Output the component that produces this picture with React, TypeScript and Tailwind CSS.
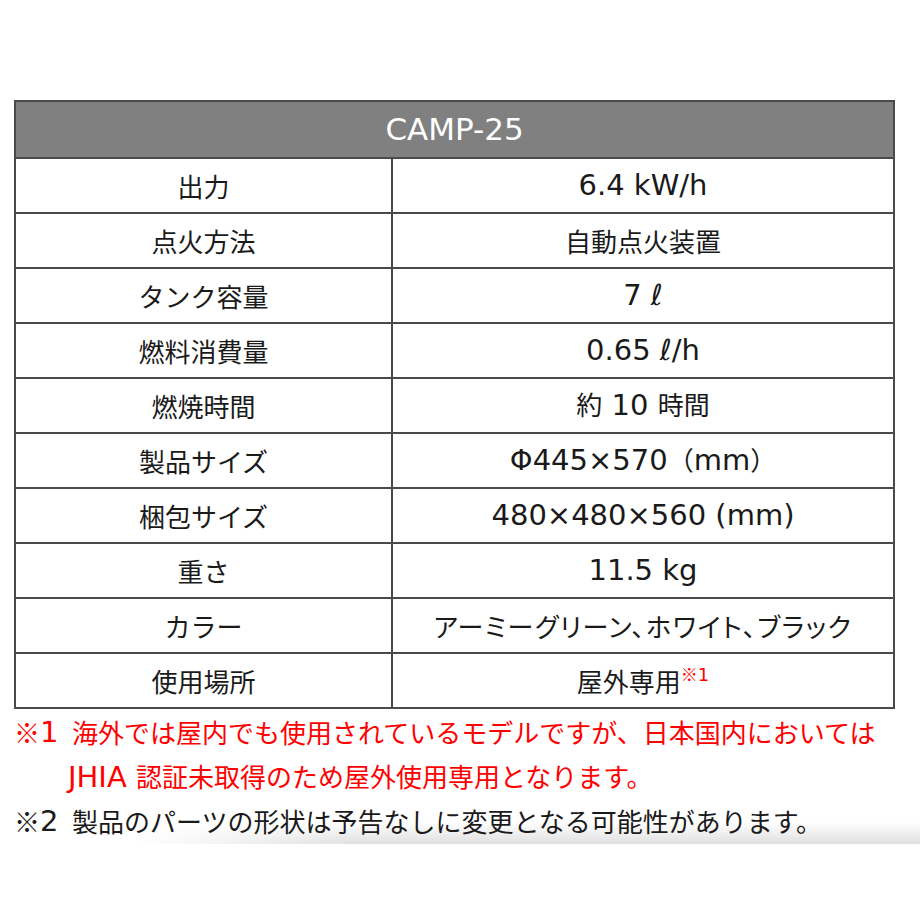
import React from "react";

// Latin runs are set a bit larger, like Meiryo's roman glyphs
const L = ({ children }: { children: React.ReactNode }) => (
  <span className="text-[29px]" style={{ fontFamily: '"DejaVu Sans", "Noto Sans CJK JP", sans-serif' }}>
    {children}
  </span>
);

const rows: { label: string; value: React.ReactNode }[] = [
  { label: "出力", value: <L>6.4 kW/h</L> },
  { label: "点火方法", value: "自動点火装置" },
  { label: "タンク容量", value: <L>7 ℓ</L> },
  { label: "燃料消費量", value: <L>0.65 ℓ/h</L> },
  {
    label: "燃焼時間",
    value: (
      <span>
        約<L> 10 </L>時間
      </span>
    ),
  },
  {
    label: "製品サイズ",
    value: (
      <span>
        <L>Φ445×570</L>（<L>mm</L>）
      </span>
    ),
  },
  { label: "梱包サイズ", value: <L>480×480×560 (mm)</L> },
  { label: "重さ", value: <L>11.5 kg</L> },
  {
    label: "カラー",
    value: (
      <span className="[font-feature-settings:'palt'] tracking-[1.5px]">
        アーミーグリーン、ホワイト、ブラック
      </span>
    ),
  },
  {
    label: "使用場所",
    value: (
      <span className="flex items-start">
        屋外専用
        <span className="text-[17px] leading-none text-[#ff0000] mt-[4px]">
          ※<span className="text-[18px]" style={{ fontFamily: '"DejaVu Sans", sans-serif' }}>1</span>
        </span>
      </span>
    ),
  },
];

export default function App() {
  return (
    <div
      className="w-[920px] h-[920px] bg-white pt-[100px] pl-[14px] text-[#1a1a1a]"
      style={{ fontFamily: '"Noto Sans CJK JP", sans-serif' }}
    >
      <div className="w-[881px] border-2 border-[#4a4a4a]">
        <div className="h-[55px] bg-[#808080] flex items-center justify-center text-white">
          <span className="text-[31px]" style={{ fontFamily: '"DejaVu Sans", sans-serif' }}>
            CAMP-25
          </span>
        </div>
        {rows.map((r, i) => (
          <div
            key={i}
            className="grid grid-cols-[377px_1fr] h-[55px] border-t-2 border-[#4a4a4a]"
          >
            <div className="flex items-center justify-center text-[26px] border-r-2 border-[#4a4a4a]">
              {r.label}
            </div>
            <div className="flex items-center justify-center text-[26px]">
              {r.value}
            </div>
          </div>
        ))}
      </div>
      <div className="text-[26px] leading-[44px] mt-[1px]">
        <div className="text-[#ff0000] flex items-center">
          <span className="w-[58px] flex items-center">
            ※<L>1</L>
          </span>
          <span>海外では屋内でも使用されているモデルですが、日本国内においては</span>
        </div>
        <div className="text-[#ff0000] pl-[54px]">
          <L>JHIA </L>認証未取得のため屋外使用専用となります。
        </div>
        <div className="relative flex items-center">
          <div className="absolute left-[120px] -right-[14px] bottom-[-1px] h-[22px] bg-gradient-to-b from-white to-[#e0e0e0]">
            <div className="h-full w-[220px] bg-gradient-to-r from-white to-transparent" />
          </div>
          <span className="relative w-[58px] flex items-center">
            ※<L>2</L>
          </span>
          <span className="relative">製品のパーツの形状は予告なしに変更となる可能性があります。</span>
        </div>
      </div>
    </div>
  );
}
